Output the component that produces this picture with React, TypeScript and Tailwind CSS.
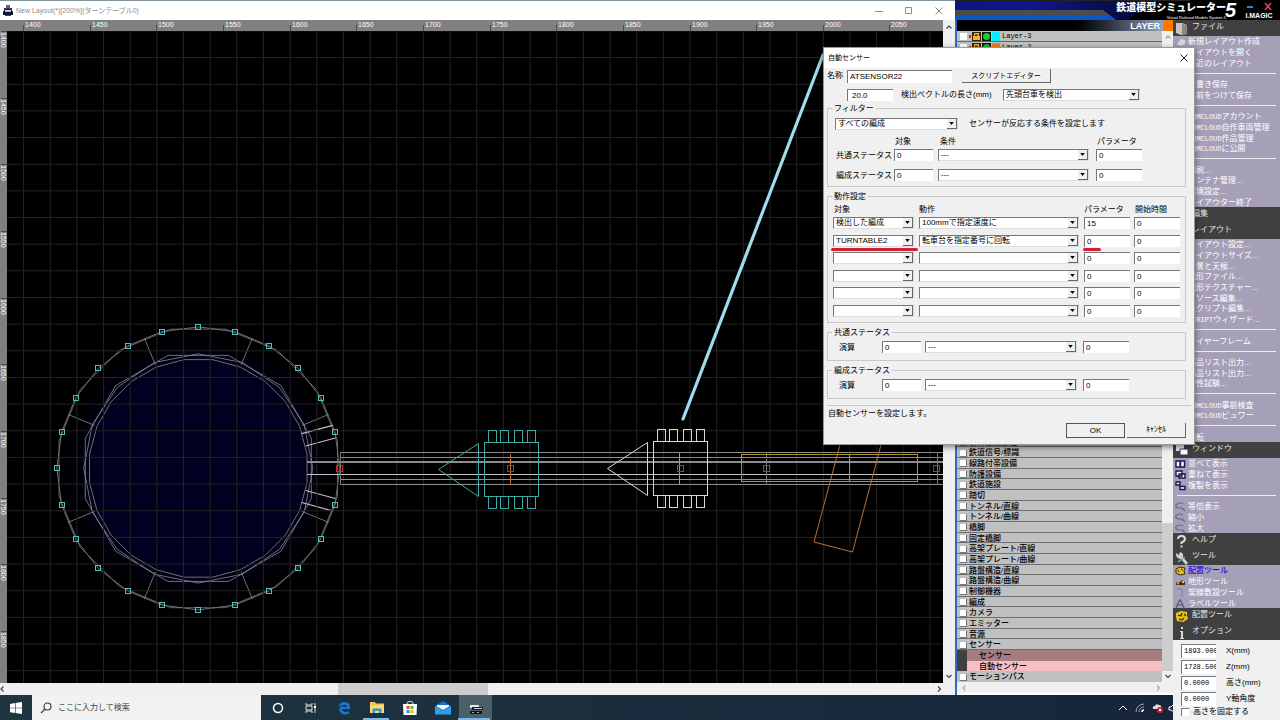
import { ReactNode } from "react"
import clsx from "clsx"

const GRID = 26.66

const TOP_LABELS = [1400, 1450, 1500, 1550, 1600, 1650, 1700, 1750, 1800, 1850, 1900, 1950, 2000, 2050]
const SIDE_LABELS = [1400, 1450, 1500, 1550, 1600, 1650, 1700, 1750, 1800, 1850]

const PARTS = [
  "線路",
  "新幹線架線柱",
  "鉄道信号/標識",
  "線路付帯設備",
  "防護設備",
  "鉄道施設",
  "踏切",
  "トンネル/直線",
  "トンネル/曲線",
  "橋脚",
  "固定橋脚",
  "高架プレート/直線",
  "高架プレート/曲線",
  "路盤構造/直線",
  "路盤構造/曲線",
  "制御機器",
  "編成",
  "カメラ",
  "エミッター",
  "音源",
  "センサー",
]

// "-" is a separator line
const FILE_MENU = [
  "新規レイアウト作成",
  "レイアウトを開く",
  "最近のレイアウト",
  "-",
  "上書き保存",
  "名前をつけて保存",
  "-",
  "VRMCLOUDアカウント",
  "VRMCLOUD自作車両管理",
  "VRMCLOUD作品管理",
  "VRMCLOUDに公開",
  "-",
  "印刷...",
  "コンテナ管理...",
  "環境設定...",
  "レイアウター終了",
]

const LAYOUT_MENU = [
  "レイアウト設定...",
  "レイアウトサイズ...",
  "背景と天候...",
  "地形ファイル...",
  "地形テクスチャー...",
  "リソース編集...",
  "スクリプト編集...",
  "SCRIPTウィザード...",
  "-",
  "ワイヤーフレーム",
  "-",
  "部品リスト出力...",
  "部品リスト出力...",
  "特性試験...",
  "-",
  "VRMCLOUD事前検査",
  "VRMCLOUDビュワー",
  "-",
  "運転",
]

const WINDOW_MENU = ["並べて表示", "重ねて表示", "複製を表示", "-", "等倍表示", "縮小", "拡大"]
const TOOL_MENU = ["配置ツール", "地形ツール", "架線敷設ツール", "ラベルツール"]

const ACTIONS = [
  { target: "検出した編成", action: "100mmで指定速度に", param: "15", start: "0" },
  { target: "TURNTABLE2", action: "転車台を指定番号に回転", param: "0", start: "0" },
  { target: "", action: "", param: "0", start: "0" },
  { target: "", action: "", param: "0", start: "0" },
  { target: "", action: "", param: "0", start: "0" },
  { target: "", action: "", param: "0", start: "0" },
]

const CX = 198.3
const CY = 468.4

const polar = (r: number, deg: number) => {
  const a = (deg * Math.PI) / 180
  return [CX + r * Math.cos(a), CY + r * Math.sin(a)]
}

const ring = (r: number, count: number, offset: number) =>
  Array.from({ length: count }, (_, i) => polar(r, offset + (360 / count) * i).join(",")).join(" ")

const Chevron = ({ dir, className }: { dir: "up" | "down" | "left" | "right"; className?: string }) => {
  const d = {
    up: "M1.5 5.5 4 3l2.5 2.5",
    down: "M1.5 3 4 5.5 6.5 3",
    left: "M5.5 1.5 3 4l2.5 2.5",
    right: "M3 1.5 5.5 4 3 6.5",
  }[dir]
  return (
    <svg viewBox="0 0 8 8" className={clsx("size-2 shrink-0", className)} fill="none" stroke="currentColor" strokeWidth="1.2">
      <path d={d} />
    </svg>
  )
}

const Turntable = () => (
  <g fill="none" stroke="#8c8c92" strokeWidth="0.8">
    <circle cx={CX} cy={CY} r="136" fill="url(#pit)" stroke="none" />
    <polygon points={ring(141.5, 24, 0)} />
    <polygon points={ring(142, 16, 11.25)} stroke="#77777c" />
    <polygon points={ring(117, 12, 15)} />
    <polygon points={ring(114.6, 16, 0)} />
    <polygon points={ring(109.7, 24, 7.5)} />
    {[22.5, 67.5, 112.5, 157.5, 202.5, 247.5, 292.5, 337.5].map((deg) => {
      const [x1, y1] = polar(112, deg)
      const [x2, y2] = polar(141, deg)
      return <line key={deg} x1={x1} y1={y1} x2={x2} y2={y2} />
    })}
    <path
      d="M301.7 433.7 332.7 425.3M305.7 446 335.3 438M305.7 490.5 335.3 498.5M301.7 502.5 332.7 511"
      stroke="#c0c0c0"
      strokeWidth="1.2"
    />
  </g>
)

const Sensor = ({ x, y, color, line }: { x: number; y: number; color: string; line: string }) => (
  <g transform={`translate(${x} ${y})`} fill="none" stroke={color} shapeRendering="crispEdges">
    <path d="M-72 0-32-26V27Z" shapeRendering="auto" />
    <rect x="-26" y="-27" width="54" height="54" />
    {[-22, -10, 4, 17].map((px) => (
      <g key={px}>
        <path d={`M${px}-27v-12h8v12`} />
        <path d={`M${px} 27v12h8v-12`} />
      </g>
    ))}
    <path d="M0-16V15" stroke={line} />
  </g>
)

const RedNode = ({ x }: { x: number }) => (
  <rect x={x - 2.5} y="465.5" width="6" height="6" fill="none" stroke="#dc2424" shapeRendering="crispEdges" />
)

const TrackPlan = () => (
  <svg className="min-w-0 flex-1 bg-black" aria-label="レイアウト">
    <defs>
      <pattern id="grid" x="23" y="30.4" width={GRID} height={GRID} patternUnits="userSpaceOnUse">
        <path d={`M0.5 0V${GRID}M0 0.5H${GRID}`} stroke="#222" fill="none" />
      </pattern>
      <radialGradient id="pit">
        <stop offset="0" stopColor="#000022" />
        <stop offset="0.76" stopColor="#000020" />
        <stop offset="1" stopColor="#000010" stopOpacity="0" />
      </radialGradient>
    </defs>
    <g transform="translate(-7 -31)">
      <Turntable />
      <rect x="7" y="31" width="2000" height="1200" fill="url(#grid)" />
      <g stroke="#8c8c8c" shapeRendering="crispEdges">
        <path d="M340 452.5H943M340 457.5H943M340 479.5H943M340 484.5H943" />
        <path d="M307 474.5H943" stroke="#c4c4c4" />
        <path d="M307 462H943" strokeWidth="2" />
        <path d="M340.5 452V485M766.5 452V485M937.5 452V485" stroke="#77777a" />
      </g>
      <g fill="none" stroke="#b8902c" shapeRendering="crispEdges">
        <path d="M741.5 454.5H917.5V481.5H741.5ZM849.5 454.5V481.5" />
      </g>
      <path d="M844 430 814 542 852.5 552 885 430" fill="none" stroke="#b8703a" />
      <g fill="none" stroke="#4fc0bd" shapeRendering="crispEdges">
        {Array.from({ length: 23 }, (_, i) => {
          const [x, y] = polar(141.5, 15 * (i + 1))
          return <rect key={i} x={Math.round(x) - 2.5} y={Math.round(y) - 2.5} width="5" height="5" />
        })}
      </g>
      <Sensor x={510.5} y={469.5} color="#3fa9a5" line="#c06a30" />
      <Sensor x={679.5} y={468.5} color="#d8d8d8" line="#e09020" />
      {[339, 510, 680, 766, 936].map((x) => (
        <RedNode key={x} x={x} />
      ))}
      <path d="M823 55 683 419" stroke="#9fdcec" strokeWidth="3.2" strokeLinecap="round" />
    </g>
  </svg>
)

const LayoutWindow = () => (
  <section className="row-span-2 flex min-h-0 min-w-0 flex-col bg-white">
    <header className="flex h-5 shrink-0 items-center border-t border-[#7f949c] pr-3 pl-[3px] text-[#8c8c8c]">
      <svg viewBox="0 0 10 12" className="mr-[3px] h-3 w-[10px]">
        <path d="M3 0h4v3H3z" fill="#666" />
        <path d="M1 3h8v3H1z" fill="#334" />
        <path d="M0 6h10v4H0z" fill="#16162a" />
        <path d="M2 5h6v2H2z" fill="#b8c0d8" />
        <path d="M2 10h6v1H2z" fill="#445" />
      </svg>
      <h1 className="flex-1 text-[7px] whitespace-nowrap">New Layout(*)[200%](ターンテーブル0)</h1>
      <div className="flex gap-[22px]">
        <button aria-label="最小化">
          <svg viewBox="0 0 8 8" className="size-2" stroke="currentColor"><path d="M0 4.5h8" /></svg>
        </button>
        <button aria-label="最大化">
          <svg viewBox="0 0 8 8" className="size-2" fill="none" stroke="currentColor"><path d="M.5.5h6v6h-6z" /></svg>
        </button>
        <button aria-label="閉じる">
          <svg viewBox="0 0 8 8" className="size-2" stroke="currentColor"><path d="m.5.5 7 7m0-7-7 7" /></svg>
        </button>
      </div>
    </header>
    <div className="flex min-h-0 flex-1">
      <div className="flex min-w-0 flex-1 flex-col">
        <svg className="h-[11px] w-full shrink-0 bg-[#808080]" aria-hidden="true">
          {TOP_LABELS.map((label, i) => (
            <g key={label}>
              <path d={`M${Math.round(23 + i * 66.65)}.5 5v6`} stroke="#4a4a4a" />
              <text x={Math.round(25 + i * 66.65)} y="7" fill="#fff" className="text-[7px]">
                {label}
              </text>
            </g>
          ))}
        </svg>
        <div className="flex min-h-0 flex-1">
          <svg className="h-full w-[7px] shrink-0 bg-[#808080]" aria-hidden="true">
            {SIDE_LABELS.map((label, i) => (
              <g key={label} transform={`translate(0 ${Math.round(i * 66.65)})`}>
                <path d="M1 .5h6" stroke="#4a4a4a" />
                <text transform="translate(1 1) rotate(90)" fill="#fff" className="text-[7px]">
                  {label}
                </text>
              </g>
            ))}
          </svg>
          <TrackPlan />
        </div>
      </div>
      <div className="flex w-3 shrink-0 flex-col items-center justify-between bg-[#f0f0f0] py-[3px] text-[#444]">
        <Chevron dir="up" />
        <Chevron dir="down" />
      </div>
    </div>
    <div className="flex h-3 shrink-0 items-center bg-[#f0f0f0] text-[#444]">
      <Chevron dir="left" className="-ml-[2px]" />
      <div className="flex h-full flex-1 px-[332px]">
        <div className="h-full w-[150px] bg-[#cdcdcd]" />
      </div>
      <Chevron dir="right" className="mr-3" />
    </div>
  </section>
)

const Banner = () => (
  <header className="relative col-span-2 flex items-start justify-end overflow-hidden bg-black text-white">
    <svg viewBox="0 0 325 20" preserveAspectRatio="xMinYMin slice" className="absolute inset-0 h-full w-full">
      <defs>
        <linearGradient id="sky">
          <stop offset="0" stopColor="#08187c" />
          <stop offset="0.4" stopColor="#10158c" />
          <stop offset="1" stopColor="#04052a" />
        </linearGradient>
      </defs>
      <path d="M0 0h235v1H0z" fill="#222" />
      <path d="M0 1h200L172 20H0z" fill="url(#sky)" />
      <path d="M0 10h148l8 6H0z" fill="#4c4c50" />
      <path d="M0 16h156l5 4H0z" fill="#0b57c8" />
    </svg>
    <div className="relative flex h-5 items-start gap-1 pr-1">
      <div className="text-right">
        <div className="text-[10px] leading-[16px] font-black whitespace-nowrap">鉄道模型シミュレーター</div>
        <div className="text-[4px] leading-[4px] whitespace-nowrap">Virtual Railroad Models System-5</div>
      </div>
      <div className="-ml-[5px] w-[13px] text-[20px] leading-5 font-bold italic">5</div>
      <div className="flex w-[34px] flex-col items-center">
        <div className="flex h-[11px] w-full justify-between px-1">
          <button aria-label="最小化">
            <svg viewBox="0 0 8 8" className="size-2" stroke="#3b7be0" strokeWidth="2"><path d="M1 5h6" /></svg>
          </button>
          <button aria-label="終了">
            <svg viewBox="0 0 8 8" className="size-2" stroke="#ef4060" strokeWidth="1.5"><path d="m1 1 6 7m0-7-6 7" /></svg>
          </button>
        </div>
        <div className="text-[7px] leading-[9px] font-bold">I.MAGIC</div>
      </div>
    </div>
  </header>
)

const LayerRow = ({ name, color, bulb }: { name: string; color: string; bulb: string }) => (
  <li className="flex h-[11px] items-center border-b border-[#666] bg-[#c0c0c0] pl-[3px]">
    <input type="checkbox" aria-label={name} className="size-[7px] appearance-none bg-white" />
    <svg viewBox="0 0 38 9" className="mr-[-4px] ml-px h-[9px] w-[38px]" aria-hidden="true">
      <path d="M1 3h2v3H1z" fill="#c03030" />
      <path d="M4 0h9v9H4z" fill="#2c2410" />
      <path d="M5 4h7v4H5zM6 1h5v3H9.5V2.5H7V4H6z" fill="#f0b030" />
      <path d="M14 0h9v9h-9z" fill="#111" />
      <circle cx="18.5" cy="4.5" r="3.5" fill={bulb} />
      <path d="M24 0h8v9h-8z" fill={color} />
    </svg>
    <span className="font-['Liberation_Mono',monospace] text-[7px]">{name}</span>
  </li>
)

const PartsPanel = () => (
  <section className="flex min-h-0 flex-col border-l-2 border-[#2b6cc0] bg-[#c0c0c0] text-black">
    <h2 className="flex h-[11px] shrink-0 items-center bg-linear-to-r from-black from-50% to-[#a8bce0] text-[9px] font-bold text-white">
      <span className="flex-1 text-right">LAYER</span>
      <span className="ml-[3px] h-full w-[10px] bg-[#ff7800]" />
    </h2>
    <div className="flex min-h-0 flex-1">
      <div className="flex min-w-0 flex-1 flex-col justify-between">
        <ul>
          <LayerRow name="Layer-3" color="#00f0ff" bulb="#10d030" />
          <LayerRow name="Layer-2" color="#f08020" bulb="#10c030" />
        </ul>
        <ul className="grid h-64 auto-rows-fr">
          {PARTS.map((name, i) => (
            <li key={i} className="flex min-h-0 items-center border-b border-[#707070] bg-[#c0c0c0] pt-[2px] pl-[3px]">
              <input type="checkbox" aria-label={name} className="mr-[2px] size-[7px] appearance-none border-r border-b border-[#777] bg-white" />
              <span className="font-medium whitespace-nowrap">{name}</span>
            </li>
          ))}
          <li className="flex min-h-0 items-center border-l-[10px] border-[#404040] bg-[#a57c80] pt-[2px] pl-3 font-medium">センサー</li>
          <li className="flex min-h-0 items-center border-l-[10px] border-[#404040] bg-[#f8bfc2] pt-[2px] pl-3 font-medium">自動センサー</li>
          <li className="flex min-h-0 items-center bg-[#c0c0c0] pt-px pl-[3px]">
            <input type="checkbox" aria-label="モーションパス" className="mr-[2px] size-[7px] appearance-none border-r border-b border-[#777] bg-white" />
            <span className="font-medium">モーションパス</span>
          </li>
        </ul>
      </div>
      <div className="flex w-[11px] flex-col items-center bg-[#f0f0f0] py-[2px] text-[#999]">
        <Chevron dir="up" />
        <div className="mt-auto mb-px h-[148px] w-full bg-[#cdcdcd]" />
        <Chevron dir="down" className="text-[#444]" />
      </div>
    </div>
    <div className="flex h-[13px] shrink-0 items-center justify-between border-b-2 border-white bg-[#f0f0f0] px-[3px] text-[#aaa]">
      <Chevron dir="left" />
      <Chevron dir="right" className="mr-2" />
    </div>
  </section>
)

const ToolHeading = ({ title, children }: { title: string; children?: ReactNode }) => (
  <h2 className="flex h-4 shrink-0 items-center bg-[#404040] pb-[3px] pl-[2px] text-[#e6e6e6]">
    <svg viewBox="0 0 14 14" className="mr-[3px] -mb-[4px] h-[14px] w-[14px]">
      {children}
    </svg>
    {title}
  </h2>
)

const MenuIcon = ({ index, kind }: { index: number; kind: string }) => {
  if (kind === "file" && index === 0) {
    return <path d="M2 7 6 2l4 1v4L6 9z" fill="#d8d8dc" />
  }
  if (kind === "window" && index < 3) {
    return (
      <g fill="#fff" stroke="#141450" strokeWidth="1.4">
        {index === 0 && <path d="M1 2h4v6H1zM5.500 2h4v6h-4z" />}
        {index === 1 && <path d="M1 1h6v5H1zM4 4h6v4H4z" />}
        {index === 2 && <path d="M1 1h4v3H1zM5 5.500h5v3H5z" />}
      </g>
    )
  }
  if (kind === "window" && index > 3) {
    return (
      <g fill="none" stroke="#6a6878" strokeWidth="1.2">
        <path d="M8 2Q5 0 2 2T3 6h5" />
        <path d="m7 6 3 3" />
      </g>
    )
  }
  if (kind === "tool" && index === 0) {
    return <path d="M1 3 5 1l5 1-1 3 1 3-5 1-4-2zM3 4l1 2M6 3l2 1" fill="#e8b820" stroke="#3a2c08" />
  }
  if (kind === "tool" && index === 1) {
    return (
      <g>
        <path d="M1 5h4l2-2 3 2v3H1z" fill="#3c2c1c" />
        <circle cx="3" cy="6" r="1.5" fill="#e88820" />
        <circle cx="8" cy="5" r="1.2" fill="#f0c060" />
      </g>
    )
  }
  if (kind === "tool" && index === 2) {
    return <path d="M2 1h5v8" fill="none" stroke="#85819a" />
  }
  if (kind === "tool" && index === 3) {
    return <path d="M1 9 4.500 1h1L9 9M3 6h4.500" fill="none" stroke="#555560" strokeWidth="1.2" />
  }
  return null
}

const ToolMenu = ({ items, kind, className }: { items: string[]; kind: string; className: string }) => (
  <ul className={clsx("grid shrink-0 auto-rows-fr bg-[#a59fb8] text-white", className)}>
    {items.map((item, i) => {
      if (item === "-") {
        return (
          <li key={i} className="flex min-h-0 items-center px-1">
            <hr className="w-full border-white/80" />
          </li>
        )
      }
      const latin = item.match(/^[A-Z]+/)?.[0] ?? ""
      return (
        <li key={i} className="flex min-h-0 items-center pt-[2px] pl-[2px]">
          <svg viewBox="0 0 11 10" className="mr-[2px] h-[10px] w-[11px] shrink-0">
            <MenuIcon index={i} kind={kind} />
          </svg>
          <button className={clsx("flex items-center whitespace-nowrap", kind === "tool" && i === 0 && "font-medium text-[#1010e0]")}>
            <span className="font-['Liberation_Mono',monospace] text-[7px]">{latin}</span>
            {item.slice(latin.length)}
          </button>
        </li>
      )
    })}
  </ul>
)

const Field = ({ label, value, className }: { label: string; value: string; className?: string }) => (
  <input
    aria-label={label}
    defaultValue={value}
    className={clsx("h-3 min-w-0 border-t border-l border-[#777] bg-white pl-[2px] leading-[10px]", className)}
  />
)

const DropDown = ({ label, value, className }: { label: string; value: string; className?: string }) => (
  <span className={clsx("relative flex h-3", className)}>
    <select
      aria-label={label}
      defaultValue={value}
      className="h-3 w-full appearance-none border border-[#777] border-r-[#ddd] border-b-[#ddd] bg-white pr-3 pl-[2px] leading-[10px]"
    >
      <option>{value}</option>
    </select>
    <span className="pointer-events-none absolute top-px right-px flex h-[10px] w-[10px] items-center justify-center border-r border-b border-[#666] bg-[#f0f0f0]">
      <svg viewBox="0 0 6 4" className="h-[3px] w-[5px]"><path d="M0 0h6L3 4z" /></svg>
    </span>
  </span>
)

const Coordinate = ({ id, label, value }: { id: string; label: string; value: string }) => (
  <div className="flex h-4 items-center">
    <input
      id={id}
      defaultValue={value}
      className="h-[14px] w-[35px] border-t border-l border-[#777] bg-white pb-[2px] pl-[2px] font-['Liberation_Mono',monospace] text-[7px]"
    />
    <label htmlFor={id} className="ml-[10px] whitespace-nowrap">
      {label}
    </label>
  </div>
)

const ToolPanel = () => (
  <aside className="row-span-2 flex min-h-0 flex-col overflow-hidden bg-[#f0f0f0]">
    <ToolHeading title="ファイル">
      <path d="M1 1h6l5 2v9l-6 1-5-2z" fill="#c8c4bc" />
      <path d="M7 2l5 1v9l-5 1z" fill="#8c8880" />
    </ToolHeading>
    <ToolMenu items={FILE_MENU} kind="file" className="h-[171px]" />
    <ToolHeading title="編集" />
    <ToolHeading title="レイアウト" />
    <ToolMenu items={LAYOUT_MENU} kind="layout" className="h-[203px]" />
    <ToolHeading title="ウィンドウ">
      <path d="M1 1h8v6H1z" fill="#e8e8f0" />
      <path d="M5 5h8v6H5z" fill="#fff" stroke="#333360" />
    </ToolHeading>
    <ToolMenu items={WINDOW_MENU} kind="window" className="h-[75px]" />
    <ToolHeading title="ヘルプ">
      <path d="M3 4q0-3 3.500-3T10 4q0 2-3.500 3.500V9" fill="none" stroke="#ddd" strokeWidth="2" />
      <path d="M5.500 10.500h2v2h-2z" fill="#ddd" />
    </ToolHeading>
    <ToolHeading title="ツール">
      <path d="M1 2l3 2 1-3q4 1 3 5l5 6-2 2-5-6q-4 0-5-4z" fill="#c8d4d4" />
      <path d="M3 11l7-5" stroke="#8aa" strokeWidth="1.5" />
    </ToolHeading>
    <ToolMenu items={TOOL_MENU} kind="tool" className="h-[43px]" />
    <ToolHeading title="配置ツール">
      <path d="M1 3l5-2 6 1v3l1 4-5 3-6-1-1-4z" fill="#e8c020" />
      <path d="M3 5l3 1 1-3M9 4l2 2M4 9l3 1 2-2" stroke="#3a2c08" fill="none" strokeWidth="1.3" />
    </ToolHeading>
    <ToolHeading title="オプション">
      <path d="M6 1h2v2H6zM5 5h3v7h1v1H5v-1h1V6H5z" fill="#d8d8d8" />
    </ToolHeading>
    <form className="flex flex-col pt-[3px] pl-2">
      <Coordinate id="pos-x" label="X(mm)" value="1893.0000" />
      <Coordinate id="pos-z" label="Z(mm)" value="1728.5000" />
      <Coordinate id="height" label="高さ(mm)" value="0.0000" />
      <Coordinate id="angle" label="Y軸角度" value="0.0000" />
      <label className="flex items-center gap-1">
        <input type="checkbox" className="size-2 appearance-none border-t border-l border-[#777] bg-white" />
        高さを固定する
      </label>
    </form>
  </aside>
)

const Group = ({ title, className, children }: { title: string; className?: string; children: ReactNode }) => (
  <fieldset className={clsx("min-w-0 border border-[#c8c8c8]", className)}>
    <legend className="ml-1 h-[10px] px-[2px] leading-[12px]">{title}</legend>
    {children}
  </fieldset>
)

const StatusFilter = ({ label }: { label: string }) => (
  <div className="flex h-3 items-center">
    <span className="w-[58px] pt-[2px]">{label}</span>
    <Field label={`${label} 対象`} value="0" className="w-[39px]" />
    <DropDown label={`${label} 条件`} value="---" className="ml-[5px] w-[151px]" />
    <Field label={`${label} パラメータ`} value="0" className="ml-[7px] w-[46px]" />
  </div>
)

const StatusOperation = ({ title, className }: { title: string; className?: string }) => (
  <Group title={title} className={clsx("h-[34px]", className)}>
    <div className="mt-1 flex h-3 items-center pl-[11px]">
      <span className="w-[43px] pt-[2px]">演算</span>
      <Field label={`${title} 対象`} value="0" className="w-[39px]" />
      <DropDown label={`${title} 演算`} value="---" className="ml-1 w-[152px]" />
      <Field label={`${title} パラメータ`} value="0" className="ml-[6px] w-[46px]" />
    </div>
  </Group>
)

const SensorDialog = () => (
  <div
    role="dialog"
    aria-label="自動センサー"
    className="absolute top-[47px] right-[85px] w-[372px] border border-[#999] bg-[#f0f0f0] pb-[6px] text-black shadow-[0_2px_6px_rgba(0,0,0,0.5)]"
  >
    <div className="flex h-5 items-center justify-between bg-white pr-[6px] pl-1">
      <h2 className="text-[7px]">自動センサー</h2>
      <button aria-label="閉じる">
        <svg viewBox="0 0 8 8" className="size-2" stroke="#222"><path d="m.5.5 7 7m0-7-7 7" /></svg>
      </button>
    </div>
    <div className="px-[3px]">
      <div className="flex h-[15px] items-center pt-px">
        <label htmlFor="sensor-name" className="w-5">名称</label>
        <input id="sensor-name" defaultValue="ATSENSOR22" className="h-[13px] w-[105px] border-t border-l border-[#777] bg-white pb-px pl-[2px]" />
        <button className="ml-[10px] h-[14px] w-[89px] border-r border-b border-[#666] text-center text-[7px] leading-[12px]">スクリプトエディター</button>
      </div>
      <div className="mt-[6px] flex h-3 items-center pl-5">
        <input id="vector-length" defaultValue="20.0" className="h-3 w-[46px] border-t border-l border-[#777] bg-white pl-1" />
        <label htmlFor="vector-length" className="ml-2 w-[102px]">検出ベクトルの長さ(mm)</label>
        <DropDown label="検出対象" value="先頭台車を検出" className="w-[137px]" />
      </div>

      <Group title="フィルター" className="mt-[2px] mr-[5px] h-[84px]">
        <div className="mt-[5px] flex items-center pl-[7px]">
          <DropDown label="フィルター" value="すべての編成" className="w-[123px]" />
          <span className="ml-[11px]">センサーが反応する条件を設定します</span>
        </div>
        <div className="mt-[7px] mb-[2px] flex h-[10px] items-center pl-[67px]">
          <span className="w-[45px]">対象</span>
          <span className="w-[157px]">条件</span>
          <span>パラメータ</span>
        </div>
        <div className="flex flex-col gap-2 pl-2">
          <StatusFilter label="共通ステータス" />
          <StatusFilter label="編成ステータス" />
        </div>
      </Group>

      <Group title="動作設定" className="mt-1 mr-[5px] h-[132px]">
        <div className="mt-[4px] mb-[2px] flex h-[10px] items-center pl-[6px]">
          <span className="w-[85px]">対象</span>
          <span className="w-[165px]">動作</span>
          <span className="w-[51px]">パラメータ</span>
          <span>開始時間</span>
        </div>
        <div className="flex h-[100px] flex-col justify-between pl-[5px]">
          {ACTIONS.map((row, i) => (
            <div key={i} className="relative flex h-3 items-center">
              <DropDown label={`対象 ${i + 1}`} value={row.target} className="w-[81px]" />
              <DropDown label={`動作 ${i + 1}`} value={row.action} className="ml-[5px] w-[160px]" />
              <Field label={`パラメータ ${i + 1}`} value={row.param} className="ml-[5px] w-[46px]" />
              <Field label={`開始時間 ${i + 1}`} value={row.start} className="ml-1 w-[46px]" />
              {i === 1 && (
                <>
                  <span className="absolute top-[13px] -left-[2px] h-[3px] w-[87px] rounded-full bg-[#d21f33]" />
                  <span className="absolute top-[13px] left-[250px] h-[3px] w-[18px] rounded-full bg-[#d21f33]" />
                </>
              )}
            </div>
          ))}
        </div>
      </Group>

      <StatusOperation title="共通ステータス" className="mt-1 mr-[5px]" />
      <StatusOperation title="編成ステータス" className="mt-1 mr-[5px]" />

      <p className="mt-[6px] border-t border-[#c8c8c8] pt-[3px] pl-px">自動センサーを設定します。</p>
      <div className="mt-1 flex justify-end gap-[2px] pr-[5px]">
        <button className="h-[15px] w-[59px] border border-[#555] bg-[#f0f0f0]">OK</button>
        <button className="h-[15px] w-[59px] border-r border-b border-[#666] bg-[#f0f0f0]">ｷｬﾝｾﾙ</button>
      </div>
    </div>
  </div>
)

const TaskButton = ({ label, active, children }: { label: string; active?: boolean; children: ReactNode }) => (
  <button aria-label={label} className={clsx("flex h-full w-[33px] items-center justify-center", active && "bg-[#4b5f68]")}>
    <svg viewBox="0 0 16 16" className="size-4" fill="none">
      {children}
    </svg>
  </button>
)

const Taskbar = () => (
  <footer className="relative col-span-2 flex items-center overflow-hidden bg-linear-to-r from-[#1f363f] to-[#17253b] text-white">
    <button aria-label="スタート" className="flex h-full w-8 items-center justify-center">
      <svg viewBox="0 0 12 12" className="size-3" fill="#fff">
        <path d="M0 2l5-1v4.700H0zM5.600.9 12 0v5.700H5.600zM0 6.300h5V11l-5-.8zM5.600 6.300H12V12l-6.400-.9z" />
      </svg>
    </button>
    <div className="flex h-full w-[229px] items-center bg-[#f2f2f2] pl-2 text-[#444]">
      <svg viewBox="0 0 12 12" className="mr-[6px] size-3" fill="none" stroke="#333" strokeWidth="1.1">
        <circle cx="7.5" cy="4.5" r="3.5" />
        <path d="M5 7 1 11" />
      </svg>
      <input aria-label="検索" placeholder="ここに入力して検索" className="w-40 placeholder:text-[#444]" />
    </div>
    <div className="flex h-full">
      <TaskButton label="Cortana">
        <circle cx="8" cy="8" r="4.5" stroke="#fff" strokeWidth="1.5" />
      </TaskButton>
      <TaskButton label="タスク ビュー">
        <path d="M3 3v2h6V3M3 13v-2h6v2M3 6h6v4H3zM12 3v10" stroke="#ddd" />
        <path d="M11 6h2v2h-2z" fill="#fff" />
      </TaskButton>
      <TaskButton label="Edge">
        <path d="M2 7.500C3 3.500 6 2 8.500 2c4 0 6 3 5.500 7H6c.3 3.500 4.500 3.600 7 2v2.500c-4 2-9.500 1-9.500-4C3.500 7 6 5.500 7 5 4.500 5 3 6 2 7.500ZM6.200 7H11c0-3-4.400-3.200-4.800 0Z" fill="#1379d4" fillRule="evenodd" />
      </TaskButton>
      <TaskButton label="エクスプローラー">
        <path d="M1 2h5l1 1.500h8V13H1z" fill="#f3c652" />
        <path d="M1 5h14v8H1z" fill="#fbd975" />
        <path d="M3.500 13V8.500h9V13H10v-2H6v2z" fill="#3f93cf" />
      </TaskButton>
      <TaskButton label="ストア">
        <path d="M5 5V3q0-1.500 3-1.500T11 3v2" stroke="#ddd" />
        <path d="M1 4h14l-.5 11h-13z" fill="#fff" />
        <path d="M4.500 6h3v3h-3z" fill="#e8502a" />
        <path d="M8.500 6h3v3h-3z" fill="#72b52c" />
        <path d="M4.500 10h3v3h-3z" fill="#2a8fdc" />
        <path d="M8.500 10h3v3h-3z" fill="#f4b714" />
      </TaskButton>
      <TaskButton label="メール">
        <path d="M0 6l8-5 8 5v8H0z" fill="#1671c4" />
        <path d="M2 5h12v1.500L8 10 2 6.500z" fill="#eef6fc" />
        <path d="M0 6l8 5 8-5v8.500H0z" fill="#2fa0e8" />
      </TaskButton>
      <TaskButton label="鉄道模型シミュレーター" active>
        <path d="M2 5h9v3H2z" fill="#e8e8e8" />
        <path d="M4 7h11v3H4z" fill="#222" />
        <path d="M6 8h8v1H6z" fill="#c8c8d0" />
        <path d="M2 11h12v3H2z" fill="#15151c" />
        <path d="M4 12h2v1H4zM9 12h2v1H9z" fill="#aaa" />
      </TaskButton>
    </div>
    <span className="absolute bottom-0 left-[363px] h-[2px] w-[26px] bg-[#76b9ed]" />
    <span className="absolute bottom-0 left-[458px] h-[2px] w-8 bg-[#76b9ed]" />
    <div className="ml-auto flex items-center gap-[7px]">
      <svg viewBox="0 0 10 10" className="size-[10px]" fill="none" stroke="#fff"><path d="m1 7 4-4 4 4" /></svg>
      <svg viewBox="0 0 10 10" className="size-[10px]" fill="none" stroke="#9aa6b0">
        <path d="M1 9a8 8 0 0 1 8-8M4 9a5 5 0 0 1 5-5" />
        <path d="M7 9a2 2 0 0 1 2-2" stroke="#fff" strokeWidth="1.5" />
      </svg>
      <svg viewBox="0 0 11 10" className="-mr-[2px] h-[10px] w-[11px]">
        <path d="M1 6q-1-3 2-3 1-3 4-1 3 0 2 4z" fill="#ddd" />
        <circle cx="8" cy="7" r="3" fill="#d8202c" />
        <path d="m7 6 2 2m0-2-2 2" stroke="#fff" />
      </svg>
      <svg viewBox="0 0 5 10" className="h-[10px] w-[5px]" fill="none" stroke="#fff"><path d="M1 4v3h2l3 2M1 4h2l3-3" /></svg>
    </div>
  </footer>
)

const App = () => (
  <div className="relative grid h-screen w-full grid-cols-[minmax(0,1fr)_218px_107px] grid-rows-[20px_minmax(0,1fr)_25px] overflow-hidden font-['Liberation_Sans','Noto_Sans_CJK_JP',sans-serif] text-[8px] leading-[10px]">
    <LayoutWindow />
    <Banner />
    <PartsPanel />
    <ToolPanel />
    <Taskbar />
    <SensorDialog />
  </div>
)

export default App
